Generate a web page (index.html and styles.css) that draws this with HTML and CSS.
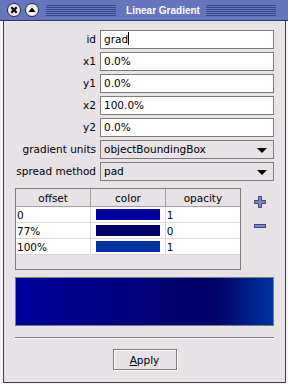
FILE: index.html
```html
<!DOCTYPE html>
<html>
<head>
    <title>Linear Gradient</title>
    <link rel="stylesheet" href="styles.css">
</head>
<body>
    <div class="window">
        <div class="titlebar">
            <span class="tb-btn">
                <svg width="14" height="14" viewBox="0 0 14 14">
                    <circle cx="7" cy="7" r="6.5" fill="#eeeeee" stroke="#2a2a40"/>
                    <path d="M4.3 4.3 L9.7 9.7 M9.7 4.3 L4.3 9.7" stroke="#000" stroke-width="2.2"/>
                </svg>
            </span>
            <span class="tb-btn">
                <svg width="14" height="14" viewBox="0 0 14 14">
                    <circle cx="7" cy="7" r="6.5" fill="#eeeeee" stroke="#2a2a40"/>
                    <path d="M3.5 9 L7 4.5 L10.5 9 Z" fill="#000"/>
                </svg>
            </span>
            <span class="stripes"></span>
            <span class="title">Linear Gradient</span>
            <span class="stripes"></span>
        </div>

        <div class="content">
            <div class="form">
                <label>id</label>
                <div class="field">grad<span class="caret"></span></div>
                <label>x1</label>
                <div class="field">0.0%</div>
                <label>y1</label>
                <div class="field">0.0%</div>
                <label>x2</label>
                <div class="field">100.0%</div>
                <label>y2</label>
                <div class="field">0.0%</div>
                <label>gradient units</label>
                <div class="field select">objectBoundingBox<span class="arrow"></span></div>
                <label>spread method</label>
                <div class="field select">pad<span class="arrow"></span></div>
            </div>

            <div class="stops">
                <div class="table-box">
                    <table>
                        <thead>
                            <tr>
                                <th>offset</th>
                                <th>color</th>
                                <th>opacity</th>
                            </tr>
                        </thead>
                        <tbody>
                            <tr>
                                <td>0</td>
                                <td><div class="swatch" style="background:#00009c"></div></td>
                                <td>1</td>
                            </tr>
                            <tr>
                                <td>77%</td>
                                <td><div class="swatch" style="background:#000066"></div></td>
                                <td>0</td>
                            </tr>
                            <tr>
                                <td>100%</td>
                                <td><div class="swatch" style="background:#0033a0"></div></td>
                                <td>1</td>
                            </tr>
                        </tbody>
                    </table>
                </div>
                <div class="stop-buttons">
                    <svg width="12" height="12" viewBox="0 0 12 12">
                        <path d="M4.5 0.5 H7.5 V4.5 H11.5 V7.5 H7.5 V11.5 H4.5 V7.5 H0.5 V4.5 H4.5 Z" fill="#8088c0" stroke="#404878"/>
                    </svg>
                    <svg width="12" height="5" viewBox="0 0 12 5">
                        <rect x="0.5" y="0.5" width="11" height="3" fill="#8088c0" stroke="#404878"/>
                    </svg>
                </div>
            </div>

            <div class="preview"></div>

            <hr class="separator">

            <div class="actions">
                <button><u>A</u>pply</button>
            </div>
        </div>
    </div>
</body>
</html>
```

FILE: styles.css
```css
body {
    margin: 0;
    padding: 0;
    font-family: "DejaVu Sans", sans-serif;
    font-size: 10.5px;
    color: #000;
    background-color: #f4f2f4;
}

.window {
    width: 288px;
    height: 384px;
    box-sizing: border-box;
    display: flex;
    flex-direction: column;
    background-color: #f4f2f4;
}

.titlebar {
    height: 21px;
    box-sizing: border-box;
    display: flex;
    align-items: center;
    gap: 2px;
    padding: 0 8px 0 6px;
    background-color: #6674bc;
    border-bottom: 1px solid #303868;
}

.tb-btn {
    display: flex;
    width: 16px;
    justify-content: center;
}

.stripes {
    flex: 1;
    height: 11px;
    margin: 0 4px;
    background: repeating-linear-gradient(to bottom, #3a4690 0, #3a4690 1px, transparent 1px, transparent 2px);
}

.title {
    color: #fff;
    font-weight: bold;
    font-size: 10px;
    font-family: "Liberation Sans", sans-serif;
    margin-left: 4px;
}

.content {
    flex: 1;
    margin: 0 2px 1px 3px;
    padding: 9px 11px 0 11px;
    background-color: #e6e2e6;
    border-left: 1px solid #404040;
    border-right: 1px solid #404040;
    border-bottom: 1px solid #404040;
}

.form {
    display: grid;
    grid-template-columns: 1fr 174px;
    column-gap: 4px;
    row-gap: 3px;
}

.form label {
    text-align: right;
    line-height: 19px;
    white-space: nowrap;
}

.field {
    position: relative;
    height: 19px;
    box-sizing: border-box;
    border: 1px solid #7c7c7c;
    background-color: #fff;
    padding-left: 3px;
    line-height: 17px;
}

.caret {
    display: inline-block;
    width: 1px;
    height: 13px;
    background-color: #000;
    vertical-align: -2px;
}

.select {
    background-color: #e6e2e6;
}

.arrow {
    position: absolute;
    right: 6px;
    top: 7px;
    border-left: 5px solid transparent;
    border-right: 5px solid transparent;
    border-top: 5px solid #000;
}

.stops {
    display: flex;
    margin-top: 7px;
}

.table-box {
    width: 226px;
    height: 82px;
    box-sizing: border-box;
    border: 1px solid #7c7c7c;
    background-color: #e6e2e6;
}

table {
    width: 100%;
    border-collapse: collapse;
    table-layout: fixed;
}

th {
    height: 17px;
    font-weight: normal;
    border-right: 1px solid #a0a0a0;
    border-bottom: 1px solid #a0a0a0;
    padding: 0;
}

th:last-child, td:last-child {
    border-right: none;
}

td {
    height: 15px;
    padding: 0 0 0 1px;
    background-color: #fff;
    border-right: 1px solid #d8d8d8;
    border-bottom: 1px solid #d8d8d8;
}

.swatch {
    width: 64px;
    height: 11px;
    margin-left: 4px;
}

.stop-buttons {
    flex: 1;
    display: flex;
    flex-direction: column;
    align-items: center;
    gap: 16px;
    padding-top: 8px;
    padding-left: 4px;
}

.preview {
    height: 49px;
    margin-top: 7px;
    box-sizing: border-box;
    border: 1px solid #7c7c7c;
    background: linear-gradient(to right, #00009c 0%, #000066 77%, #0033a0 100%);
}

.separator {
    margin: 11px 0 0 0;
    border: none;
    border-top: 1px solid #7c7c7c;
    border-bottom: 1px solid #fff;
}

.actions {
    display: flex;
    justify-content: center;
    margin-top: 10px;
}

button {
    width: 64px;
    height: 21px;
    font-family: "DejaVu Sans", sans-serif;
    font-size: 10.5px;
    color: #000;
    background-color: #e6e2e6;
    border: 1px solid #7c7c7c;
    box-shadow: inset 1px 1px 0 #fff, 1px 1px 0 #fff;
    padding: 0;
}
```
